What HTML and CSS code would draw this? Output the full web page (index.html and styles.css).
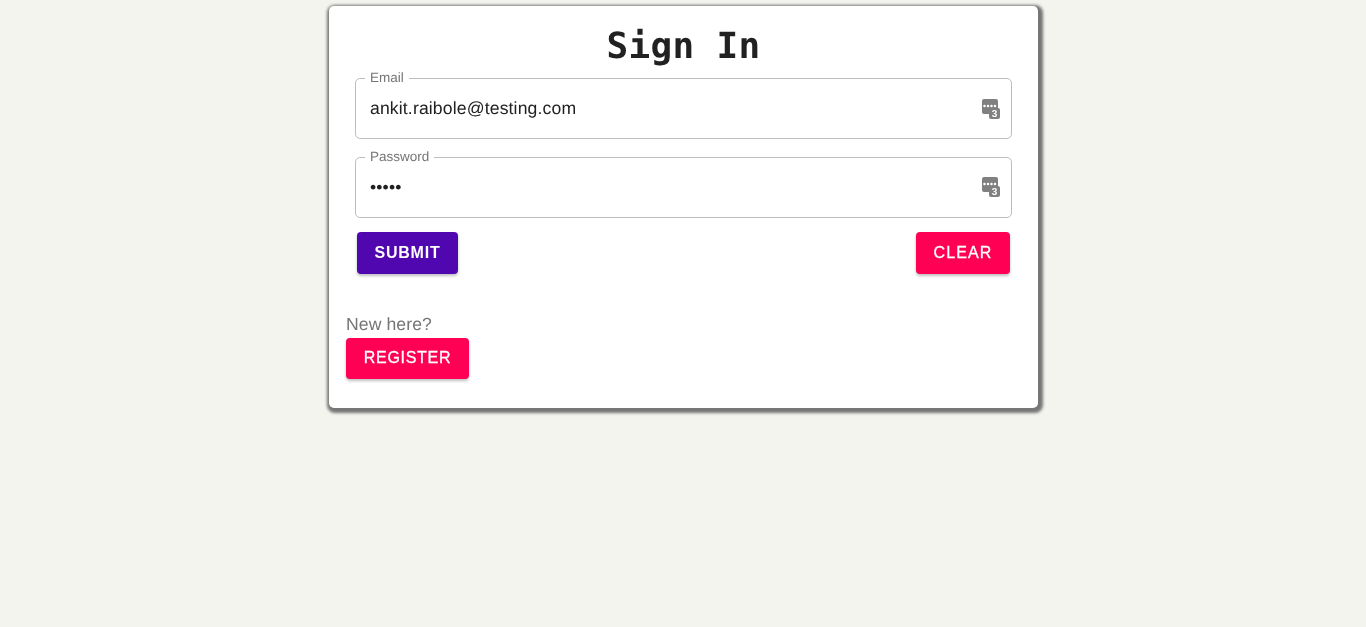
FILE: index.html
```html
<!DOCTYPE html>
<html lang="en">

<head>
    <meta charset="UTF-8">
    <meta name="viewport" content="width=device-width, initial-scale=1.0">
    <title>Sign In</title>
    <link rel="stylesheet" href="styles.css">
</head>

<body>
    <div class="card">
        <h1 class="title">Sign In</h1>
        <form class="form">
            <fieldset class="field">
                <legend class="field-label">Email</legend>
                <span class="field-value">ankit.raibole@testing.com</span>
                <svg class="key-icon" width="18" height="20" viewBox="0 0 18 20">
                    <rect x="0" y="0" width="16" height="15" rx="2" fill="#808080" />
                    <circle cx="2.5" cy="7" r="1.25" fill="#fff" />
                    <circle cx="6" cy="7" r="1.25" fill="#fff" />
                    <circle cx="9.5" cy="7" r="1.25" fill="#fff" />
                    <circle cx="13" cy="7" r="1.25" fill="#fff" />
                    <rect x="7" y="9" width="11" height="11" rx="2" fill="#808080" />
                    <text x="12.5" y="18.3" class="key-num">3</text>
                </svg>
            </fieldset>
            <fieldset class="field field-password">
                <legend class="field-label">Password</legend>
                <span class="field-value">•••••</span>
                <svg class="key-icon" width="18" height="20" viewBox="0 0 18 20">
                    <rect x="0" y="0" width="16" height="15" rx="2" fill="#808080" />
                    <circle cx="2.5" cy="7" r="1.25" fill="#fff" />
                    <circle cx="6" cy="7" r="1.25" fill="#fff" />
                    <circle cx="9.5" cy="7" r="1.25" fill="#fff" />
                    <circle cx="13" cy="7" r="1.25" fill="#fff" />
                    <rect x="7" y="9" width="11" height="11" rx="2" fill="#808080" />
                    <text x="12.5" y="18.3" class="key-num">3</text>
                </svg>
            </fieldset>
            <div class="actions">
                <button type="button" class="btn btn-submit">Submit</button>
                <button type="button" class="btn btn-pink btn-clear">Clear</button>
            </div>
        </form>
        <div class="new-here">New here?</div>
        <button type="button" class="btn btn-pink btn-register">Register</button>
    </div>
</body>

</html>
```

FILE: styles.css
```css
body {
    margin: 0;
    height: 627px;
    overflow: hidden;
    background: #f3f4ee;
    font-family: "Liberation Sans", Arial, sans-serif;
    text-rendering: geometricPrecision;
}

.card {
    box-sizing: border-box;
    width: 709px;
    height: 402px;
    margin: 6px auto 0;
    padding: 0 17px;
    background: #fff;
    border-radius: 5px;
    box-shadow: 1.5px 2px 3px 3px #767676;
    will-change: transform;
}

.title {
    margin: 0;
    padding-top: 17px;
    height: 47px;
    font-family: "DejaVu Sans Mono", monospace;
    font-size: 36px;
    letter-spacing: 0.35px;
    line-height: 48px;
    font-weight: 700;
    text-align: center;
    color: #212121;
}

.form {
    padding: 0 9px;
}

.field {
    box-sizing: border-box;
    display: flex;
    align-items: center;
    height: 69px;
    margin: 0 0 10px;
    padding: 0 11px 8px 14px;
    border: 1px solid #bdbdbd;
    border-radius: 5px;
}

.field-label {
    padding: 0 5px 2px;
    margin-left: -5px;
    font-size: 13.5px;
    line-height: 15px;
    color: #757575;
}

.field-value {
    flex: 1;
    font-size: 17.6px;
    letter-spacing: 0.14px;
    color: #212121;
}

.key-icon {
    display: block;
}

.field-password .key-icon {
    margin-top: -2px;
}

.key-num {
    font-family: "Liberation Sans", sans-serif;
    font-size: 10px;
    font-weight: 700;
    fill: #fff;
    text-anchor: middle;
}

.actions {
    display: flex;
    justify-content: space-between;
    padding: 4px 2px 0;
}

.btn {
    box-sizing: border-box;
    height: 42px;
    padding: 0;
    border: none;
    border-radius: 4px;
    color: #fff;
    font-family: "Liberation Sans", Arial, sans-serif;
    font-size: 16px;
    letter-spacing: 0.8px;
    text-transform: uppercase;
    box-shadow: 0 2px 3px rgba(0, 0, 0, 0.25);
}

.btn-submit {
    width: 101px;
    background: #5107b0;
    font-weight: 700;
}

.btn-pink {
    background: #ff0055;
    -webkit-text-stroke: 0.3px #fff;
}

.btn-clear {
    width: 94px;
    letter-spacing: 1.1px;
}

.btn-register {
    display: block;
    width: 123px;
    height: 41px;
    padding-bottom: 1px;
    letter-spacing: 0.7px;
}

.new-here {
    margin-top: 39px;
    height: 25px;
    font-size: 17.6px;
    letter-spacing: 0.1px;
    line-height: 22px;
    color: #757575;
}
```
